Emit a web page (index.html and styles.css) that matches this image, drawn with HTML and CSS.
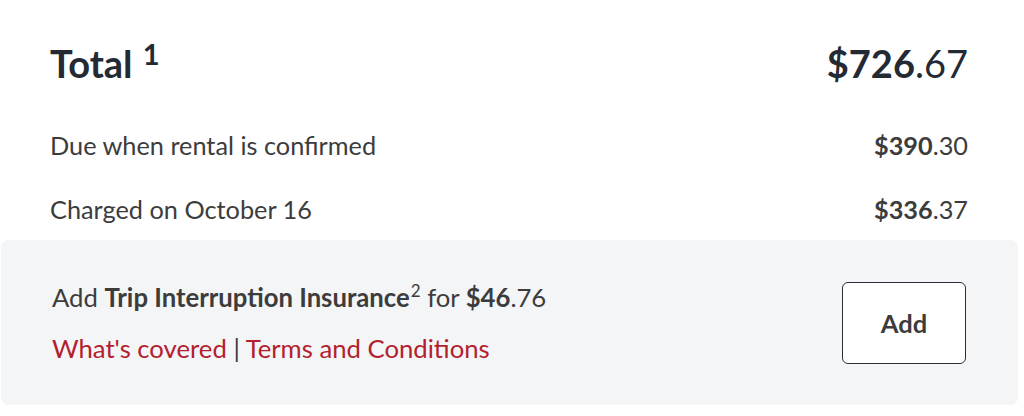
FILE: index.html
```html
<!DOCTYPE html>
<html>
<head>
<meta charset="utf-8">
<link rel="stylesheet" href="styles.css">
</head>
<body>
<div class="summary">
  <div class="total-row">
    <div class="total-label">Total <sup class="note">1</sup></div>
    <div class="total-amount"><b>$726</b>.67</div>
  </div>
  <div class="lines">
    <div class="line">
      <span>Due when rental is confirmed</span>
      <span class="amt"><b>$390</b>.30</span>
    </div>
    <div class="line">
      <span>Charged on October 16</span>
      <span class="amt"><b>$336</b>.37</span>
    </div>
  </div>
  <div class="insurance">
    <div class="ins-text">
      <div class="ins-offer">Add <b>Trip Interruption Insurance</b><sup class="sm">2</sup> for <b>$46</b>.76</div>
      <div class="ins-links"><a href="#">What's covered</a> <span class="sep">|</span> <a href="#">Terms and Conditions</a></div>
    </div>
    <button class="add-btn">Add</button>
  </div>
</div>
</body>
</html>
```
FILE: styles.css
```css
html, body { margin: 0; padding: 0; background: #fff; }
body { font-family: Lato, "Open Sans", sans-serif; color: #3c3c3c; }
.summary { width: 1017px; padding-left: 1px; }
.total-row { display: flex; justify-content: space-between; align-items: baseline; padding: 39px 50px 0 49px; }
.total-label { font-size: 38px; font-weight: 700; color: #232a33; line-height: 48px; }
.note { font-size: 29px; line-height: 0; vertical-align: 0; position: relative; top: -13px; margin-left: 1px; }
.total-amount { font-size: 38px; color: #232a33; line-height: 48px; }
.lines { display: flex; flex-direction: column; gap: 32px; margin-top: 42px; }
.line { display: flex; justify-content: space-between; align-items: baseline; padding: 0 50px 0 49px; font-size: 25.3px; line-height: 32px; }
.amt b { font-weight: 700; }
.insurance { background: #f4f5f7; border-radius: 8px; display: flex; justify-content: space-between; align-items: center; padding: 0 52px 0 51px; height: 165px; margin-top: 15px; box-sizing: border-box; }
.ins-offer { font-size: 25.7px; line-height: 32px; }
.sm { font-size: 17px; line-height: 0; vertical-align: 0; position: relative; top: -10px; margin-left: 1px; }
.ins-links { font-size: 25.7px; line-height: 32px; margin-top: 19px; }
.ins-links a { color: #b3202d; text-decoration: none; }
.sep { color: #3c3c3c; }
.add-btn { width: 124px; height: 82px; background: #fff; border: 1px solid #2a2f36; border-radius: 6px; font-family: Lato, sans-serif; font-size: 25.5px; font-weight: 700; color: #3c3c3c; padding: 0; }
```
